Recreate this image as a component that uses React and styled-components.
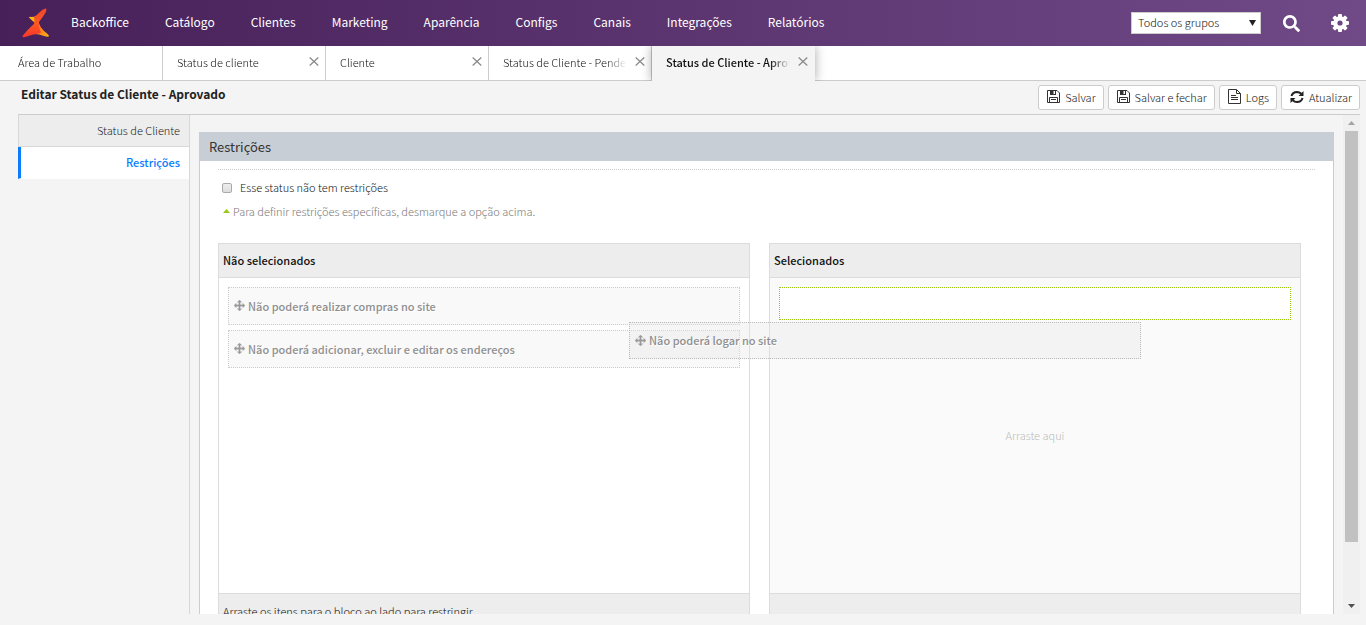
import React, { useState } from "react";
import styled, { createGlobalStyle } from "styled-components";
import { FaSearch } from "react-icons/fa";

const menu = [
  "Backoffice",
  "Catálogo",
  "Clientes",
  "Marketing",
  "Aparência",
  "Configs",
  "Canais",
  "Integrações",
  "Relatórios",
];

const tabs = [
  { id: 1, title: "Área de Trabalho", fixed: true },
  { id: 2, title: "Status de cliente" },
  { id: 3, title: "Cliente" },
  { id: 4, title: "Status de Cliente - Pendente" },
  { id: 5, title: "Status de Cliente - Aprovado" },
];

const GlobalStyle = createGlobalStyle`
  * {
    box-sizing: border-box;
  }
  body {
    margin: 0;
    background: #f4f4f4;
    color: #111;
    font-family: "Noto Sans CJK JP", "Open Sans", sans-serif;
    font-size: 11px;
    font-weight: 300;
    line-height: 16px;
  }
  button, input, select {
    font: inherit;
    color: inherit;
  }
  a {
    color: inherit;
    text-decoration: none;
  }
`;

const LogoIcon = () => (
  <svg width="28" height="30" viewBox="0 0 28 30" aria-hidden="true">
    <defs>
      <linearGradient id="flame" x1="0" y1="0" x2="0" y2="1">
        <stop offset="0" stopColor="#f0452b" />
        <stop offset="0.5" stopColor="#fb5a22" />
        <stop offset="1" stopColor="#f8352c" />
      </linearGradient>
      <linearGradient id="gold" x1="0" y1="0" x2="1" y2="1">
        <stop offset="0" stopColor="#fb4a26" />
        <stop offset="1" stopColor="#fdb515" />
      </linearGradient>
    </defs>
    <path d="M7 9.500Q7 8.500 9 9L15 8.500L15 16Q11 14 7 9.500Z" fill="#fdb515" />
    <path
      d="M13 13L16.500 14Q18 19 22 23Q27 27 27 28Q26.500 29.500 22 28Q16 25.500 11 26Z"
      fill="url(#gold)"
    />
    <path
      d="M24 0.500Q25.500 2 22 7L17 14Q16 18 18 22Q20 25 17 25.500Q11 26 3 29Q0 30 0.500 28Q7 20 12 16Q13 13 12 9Q15 7 19 3Q22 0 24 0.500Z"
      fill="url(#flame)"
    />
  </svg>
);

const GearIcon = () => (
  <svg width="18" height="18" viewBox="0 0 18 18" aria-hidden="true">
    {[0, 45, 90, 135].map((a) => (
      <rect
        key={a}
        x="7"
        y="0"
        width="4"
        height="18"
        rx="1"
        fill="#fff"
        transform={`rotate(${a} 9 9)`}
      />
    ))}
    <circle cx="9" cy="9" r="6.800" fill="#fff" />
    <circle cx="9" cy="9" r="2.600" fill="#6c4683" />
  </svg>
);

const SaveIcon = () => (
  <svg width="13" height="13" viewBox="0 0 13 13" aria-hidden="true">
    <path
      d="M.5.5H10L12.500 3V12.500H.5ZM2.500 12.500V7.500H10.500V12.500M4 9.500H9"
      fill="none"
      stroke="#333"
    />
    <path d="M3 0H9V5H3ZM6.500 1V4H8V1Z" fill="#333" fillRule="evenodd" />
  </svg>
);

const LogIcon = () => (
  <svg width="13" height="15" viewBox="0 0 13 15" aria-hidden="true">
    <path
      d="M.5.5H8.500L12.500 4.500V14.500H.5ZM8.500.5V4.500H12.500M3 6.500H8M3 8.500H10M3 10.500H10"
      fill="none"
      stroke="#333"
    />
  </svg>
);

const RefreshIcon = () => (
  <svg width="14" height="14" viewBox="0 0 14 14" aria-hidden="true">
    <path
      d="M1.500 6Q2.500 2 7 1.900Q9.500 1.900 11.300 3.700M12.500 8Q11.500 12 7 12.100Q4.500 12.100 2.700 10.300"
      fill="none"
      stroke="#222"
      strokeWidth="2"
    />
    <path d="M13.500 1V6H8.500ZM.5 13V8H5.500Z" fill="#222" />
  </svg>
);

const MoveIcon = () => (
  <svg width="11" height="11" viewBox="0 0 11 11" aria-hidden="true">
    <path
      d="M5.500 0L7.700 2.200H6.200V4.800H8.800V3.300L11 5.500L8.800 7.700V6.200H6.200V8.800H7.700L5.500 11L3.300 8.800H4.800V6.200H2.200V7.700L0 5.500L2.200 3.300V4.800H4.800V2.200H3.300Z"
      fill="#999"
      stroke="#999"
      strokeWidth="0.300"
    />
  </svg>
);

const CloseIcon = () => (
  <svg width="10" height="9" viewBox="0 0 10 9" aria-hidden="true">
    <path d="M.7.5L9.300 8.500M9.300.5L.7 8.500" stroke="#888" strokeWidth="1.200" />
  </svg>
);

const Card = ({ children, dragging }) => (
  <CardBox $dragging={dragging}>
    <MoveIcon />
    {children}
  </CardBox>
);

const App = () => {
  const [active, setActive] = useState(5);
  const [free, setFree] = useState(false);

  return (
    <Page>
      <GlobalStyle />
      <Header>
        <Logo href="#" aria-label="Início">
          <LogoIcon />
        </Logo>
        <Menu>
          {menu.map((x) => (
            <a href="#" key={x}>
              {x}
            </a>
          ))}
        </Menu>
        <GroupSelect>
          <select aria-label="Grupo">
            <option>Todos os grupos</option>
          </select>
          <svg width="7" height="6" viewBox="0 0 7 6" aria-hidden="true">
            <path d="M0 0H7L3.500 6Z" fill="#222" />
          </svg>
        </GroupSelect>
        <HeaderButton type="button" aria-label="Buscar">
          <FaSearch size={17} />
        </HeaderButton>
        <HeaderButton type="button" aria-label="Configurações">
          <GearIcon />
        </HeaderButton>
      </Header>

      <TabBar>
        {tabs.map((x) => (
          <Tab key={x.id} $active={x.id === active} $fixed={x.fixed}>
            <TabLabel type="button" onClick={() => setActive(x.id)}>
              {x.title}
            </TabLabel>
            {!x.fixed && (
              <TabClose type="button" aria-label="Fechar">
                <CloseIcon />
              </TabClose>
            )}
          </Tab>
        ))}
      </TabBar>

      <TitleBar>
        <h1>Editar Status de Cliente - Aprovado</h1>
        <Action type="button">
          <SaveIcon />
          Salvar
        </Action>
        <Action type="button">
          <SaveIcon />
          Salvar e fechar
        </Action>
        <Action type="button">
          <LogIcon />
          Logs
        </Action>
        <Action type="button">
          <RefreshIcon />
          Atualizar
        </Action>
      </TitleBar>

      <Workspace>
        <Sidebar>
          <SideLink href="#">Status de Cliente</SideLink>
          <SideLink href="#" $active>
            Restrições
          </SideLink>
        </Sidebar>
        <Content>
          <Panel>
            <h2>Restrições</h2>
            <PanelBody>
              <Check>
                <input
                  type="checkbox"
                  checked={free}
                  onChange={() => setFree(!free)}
                />
                <span>Esse status não tem restrições</span>
              </Check>
              <Hint>
                <svg width="7" height="4" viewBox="0 0 7 4" aria-hidden="true">
                  <path d="M0 4L3.500 0L7 4Z" fill="#99c814" />
                </svg>
                Para definir restrições específicas, desmarque a opção acima.
              </Hint>
              <Lists>
                <List>
                  <h3>Não selecionados</h3>
                  <ListBody>
                    <Card>Não poderá realizar compras no site</Card>
                    <Card>Não poderá adicionar, excluir e editar os endereços</Card>
                  </ListBody>
                  <ListFooter>
                    Arraste os itens para o bloco ao lado para restringir
                  </ListFooter>
                </List>
                <List>
                  <h3>Selecionados</h3>
                  <ListBody $target>
                    <DropSlot />
                    <DropText>Arraste aqui</DropText>
                  </ListBody>
                  <ListFooter />
                </List>
                <Card dragging>Não poderá logar no site</Card>
              </Lists>
            </PanelBody>
          </Panel>
        </Content>
        <Scrollbar aria-hidden="true">
          <svg width="7" height="4" viewBox="0 0 7 4">
            <path d="M0 4L3.500 0L7 4Z" fill="#a3a3a3" />
          </svg>
          <Track>
            <Thumb />
          </Track>
          <svg width="7" height="4" viewBox="0 0 7 4">
            <path d="M0 0L3.500 4L7 0Z" fill="#505050" />
          </svg>
        </Scrollbar>
      </Workspace>
    </Page>
  );
};

const Page = styled.div`
  height: 100vh;
  display: flex;
  flex-direction: column;
  padding-bottom: 11px;
  overflow: hidden;
`;

const Header = styled.header`
  height: 46px;
  flex-shrink: 0;
  display: flex;
  align-items: center;
  padding: 0 17px 0 22px;
  background: linear-gradient(90deg, #472059, #704a87);
`;

const Logo = styled.a`
  display: flex;
  margin-right: 21px;
`;

const Menu = styled.nav`
  flex: 1;
  display: flex;
  gap: 36px;
  padding-bottom: 2px;
  color: #fff;
  font-size: 12px;
  font-weight: 400;
`;

const GroupSelect = styled.div`
  position: relative;
  select {
    display: block;
    width: 130px;
    height: 22px;
    padding: 0 6px 2px;
    border: 1px solid #ccc;
    border-radius: 0;
    background: #fff;
    appearance: none;
  }
  svg {
    position: absolute;
    right: 5px;
    top: 8px;
    pointer-events: none;
  }
`;

const HeaderButton = styled.button`
  display: flex;
  margin-left: 22px;
  padding: 0;
  border: 0;
  background: none;
  color: #fff;
  & + & {
    margin-left: 31px;
  }
`;

const TabBar = styled.div`
  height: 35px;
  flex-shrink: 0;
  display: flex;
  background: #fff;
  box-shadow: inset 0 -1px #ccc;
  overflow: hidden;
`;

const Tab = styled.div`
  width: 163px;
  display: flex;
  padding: 0 6px 0 ${(p) => (p.$fixed ? "18px" : "14px")};
  border-right: 1px solid ${(p) => (p.$active ? "#f4f4f4" : "#ccc")};
  background: ${(p) => (p.$active ? "#f4f4f4" : "none")};
  box-shadow: ${(p) => (p.$active ? "0 0 10px rgba(0, 0, 0, 0.35)" : "none")};
  font-weight: ${(p) => (p.$active ? "500" : "300")};
`;

const TabLabel = styled.button`
  flex: 1;
  padding: 0 0 3px;
  border: 0;
  background: none;
  text-align: left;
  white-space: nowrap;
  overflow: hidden;
  mask-image: linear-gradient(to left, transparent, #000 20px);
`;

const TabClose = styled.button`
  display: flex;
  padding: 11px 0 0;
  margin-left: 8px;
  border: 0;
  background: none;
`;

const TitleBar = styled.div`
  height: 34px;
  flex-shrink: 0;
  display: flex;
  align-items: center;
  gap: 4px;
  margin: 0 6px 0 18px;
  border-bottom: 1px solid #ccc;
  h1 {
    flex: 1;
    margin: 0;
    padding: 0 3px 8px;
    font-size: 12px;
    font-weight: bold;
    color: #222;
  }
`;

const Action = styled.button`
  height: 25px;
  display: flex;
  align-items: center;
  gap: 5px;
  padding: 0 7px 2px 8px;
  border: 1px solid #ccc;
  border-radius: 3px;
  background: #fff;
`;

const Workspace = styled.div`
  flex: 1;
  min-height: 0;
  display: flex;
  margin: 0 6px 0 18px;
`;

const Sidebar = styled.nav`
  width: 172px;
  flex-shrink: 0;
  border-right: 1px solid #d8d8d8;
`;

const SideLink = styled.a`
  height: 32px;
  display: flex;
  align-items: center;
  justify-content: flex-end;
  padding: 0 9px 1px 0;
  border-left: ${(p) => (p.$active ? "3px solid #0a7cff" : "1px solid #d8d8d8")};
  border-bottom: 1px solid ${(p) => (p.$active ? "#fff" : "#d8d8d8")};
  background: ${(p) => (p.$active ? "#fff" : "#ededed")};
  color: ${(p) => (p.$active ? "#0a7cff" : "#222")};
  font-weight: ${(p) => (p.$active ? "500" : "300")};
`;

const Content = styled.main`
  flex: 1;
  min-width: 0;
  padding: 17px 9px 17px;
  overflow: auto;
  scrollbar-width: none;
`;

const Panel = styled.section`
  h2 {
    margin: 0;
    padding: 0 10px;
    background: #c8ced5;
    color: #333;
    font-size: 13px;
    font-weight: 400;
    line-height: 29px;
  }
`;

const PanelBody = styled.div`
  padding: 8px 18px 20px;
  border: 1px solid #ccc;
  border-top: 0;
  background: #fff;
`;

const Check = styled.label`
  display: flex;
  align-items: center;
  gap: 8px;
  padding: 9px 4px 8px;
  border-top: 1px dotted #ccc;
  input {
    width: 10px;
    height: 10px;
    margin: 2px 0 0;
    appearance: none;
    border: 1px solid #aaa;
    border-radius: 2px;
    background: linear-gradient(#eee, #ddd);
  }
  input:checked {
    background: #0a7cff;
  }
`;

const Hint = styled.p`
  display: flex;
  gap: 3px;
  margin: 0;
  padding: 0 5px;
  color: #777;
  svg {
    margin-top: 6px;
  }
`;

const Lists = styled.div`
  position: relative;
  display: flex;
  gap: 19px;
  margin: 24px 14px 0 0;
`;

const List = styled.div`
  flex: 1;
  min-width: 0;
  border: 1px solid #dcdcdc;
  h3 {
    margin: 0;
    padding: 0 4px;
    border-bottom: 1px solid #dcdcdc;
    background: #ededed;
    font-size: 11px;
    font-weight: 500;
    line-height: 33px;
  }
`;

const ListBody = styled.div`
  height: 315px;
  display: flex;
  flex-direction: column;
  gap: 5px;
  padding: 9px;
  background: ${(p) => (p.$target ? "#fafafa" : "#fff")};
`;

const CardBox = styled.div`
  height: 38px;
  display: flex;
  align-items: center;
  gap: 3px;
  padding: 0 5px 1px;
  border: 1px dotted #ccc;
  background: #f9f9f9;
  color: #8f8f8f;
  font-weight: 500;
  text-shadow: 1px 1px #fff;
  ${(p) =>
    p.$dragging &&
    `
    position: absolute;
    left: 411px;
    top: 79px;
    width: calc(50% - 30px);
    height: 37px;
    border-color: #bbb;
    background: rgba(230, 230, 230, 0.35);
  `}
`;

const DropSlot = styled.div`
  height: 33px;
  flex-shrink: 0;
  border: 1px dotted #99c814;
  background: #fff;
`;

const DropText = styled.p`
  flex: 1;
  display: flex;
  align-items: center;
  justify-content: center;
  margin: 0;
  padding-bottom: 40px;
  color: #bbb;
`;

const ListFooter = styled.div`
  height: 36px;
  padding: 0 4px;
  border-top: 1px solid #dcdcdc;
  background: #ededed;
  line-height: 34px;
`;

const Scrollbar = styled.div`
  width: 17px;
  display: flex;
  flex-direction: column;
  align-items: center;
  padding: 6px 0;
  gap: 6px;
  background: #f0f0f0;
`;

const Track = styled.div`
  flex: 1;
  width: 13px;
`;

const Thumb = styled.div`
  height: 88%;
  background: #c1c1c1;
`;

export default App;
